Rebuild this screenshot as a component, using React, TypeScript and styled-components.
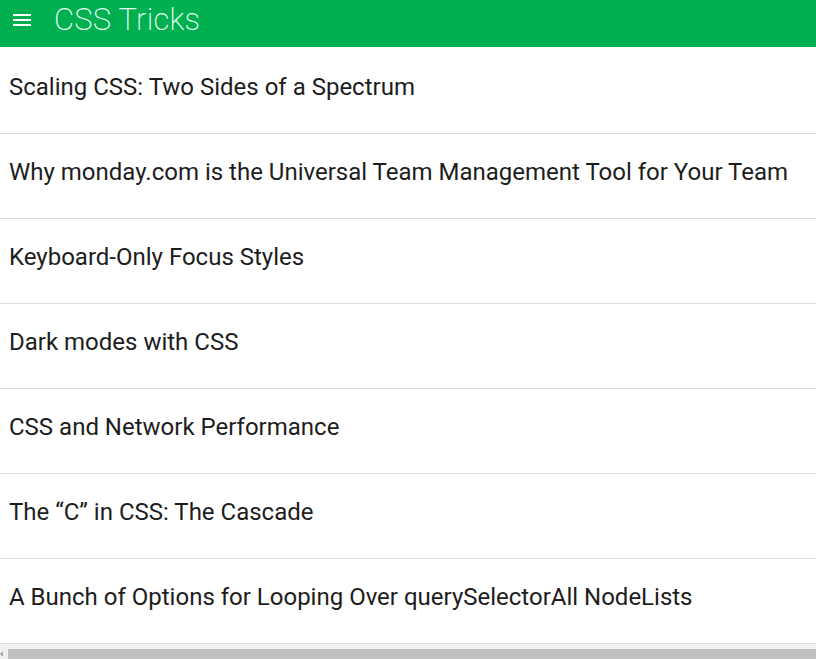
import React from "react";
import styled, { createGlobalStyle } from "styled-components";

const Global = createGlobalStyle`
  html, body { margin: 0; padding: 0; background: #fff; overflow: hidden; }
  body { font-family: Roboto, "Noto Sans", sans-serif; }
`;

const Page = styled.div`
  width: 816px;
  height: 659px;
  display: flex;
  flex-direction: column;
  overflow: hidden;
`;

const Header = styled.header`
  height: 47px;
  flex: none;
  background: #00b050;
  display: flex;
  align-items: flex-start;
  color: #fff;
`;

const MenuButton = styled.div`
  width: 24px;
  height: 24px;
  margin: 8px 20px 0 10px;
  display: flex;
`;

const Title = styled.h1`
  margin: 0;
  font-family: Roboto, sans-serif;
  font-weight: 200;
  font-size: 31px;
  line-height: 40px;
  color: #e6fff2;
  letter-spacing: 0.2px;
`;

const List = styled.ul`
  list-style: none;
  margin: 0;
  padding: 2px 0 0;
  flex: 1;
`;

const Item = styled.li`
  box-sizing: border-box;
  height: 85px;
  border-bottom: 1px solid #dcdcdc;
  display: flex;
  align-items: center;
  padding: 0 0 8px 9px;
  font-family: Roboto, sans-serif;
  font-size: 24px;
  color: #1d1d1d;
  white-space: nowrap;
`;

const ScrollTrack = styled.div`
  height: 15px;
  flex: none;
  background: #f1f1f1;
  display: flex;
  align-items: flex-end;
`;

const ScrollArrow = styled.div`
  width: 8px;
  height: 10px;
  display: flex;
  align-items: center;
`;

const ScrollThumb = styled.div`
  flex: 1;
  height: 10px;
  background: #c1c1c1;
`;

const items = [
  "Scaling CSS: Two Sides of a Spectrum",
  "Why monday.com is the Universal Team Management Tool for Your Team",
  "Keyboard-Only Focus Styles",
  "Dark modes with CSS",
  "CSS and Network Performance",
  "The \u201CC\u201D in CSS: The Cascade",
  "A Bunch of Options for Looping Over querySelectorAll NodeLists",
];

export default function App() {
  return (
    <Page>
      <Global />
      <Header>
        <MenuButton>
          <svg width="24" height="24" viewBox="0 0 24 24" fill="#fff">
            <path d="M3 18h18v-2H3v2zm0-5h18v-2H3v2zm0-7v2h18V6H3z" />
          </svg>
        </MenuButton>
        <Title>CSS Tricks</Title>
      </Header>
      <List>
        {items.map((t) => (
          <Item key={t}>{t}</Item>
        ))}
      </List>
      <ScrollTrack>
        <ScrollArrow>
          <svg width="8" height="10" viewBox="0 0 8 10">
            <path d="M0 5 L3 2 L3 8 Z" fill="#a3a3a3" />
          </svg>
        </ScrollArrow>
        <ScrollThumb />
      </ScrollTrack>
    </Page>
  );
}
